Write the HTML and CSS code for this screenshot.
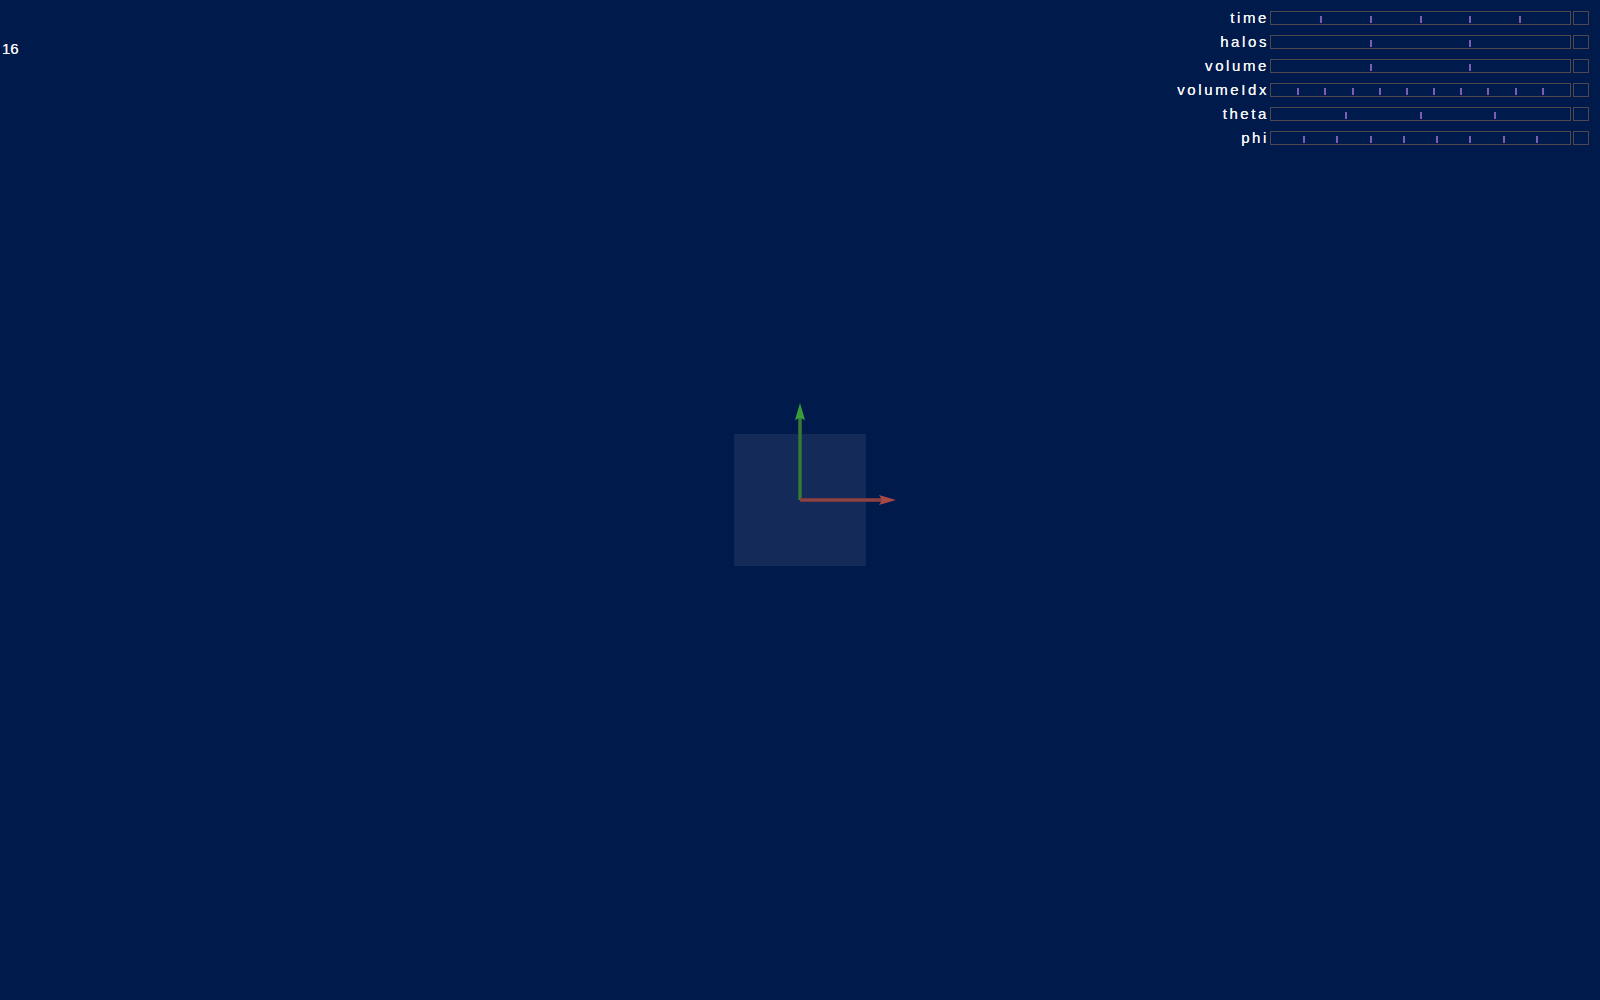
FILE: index.html
```html
<!DOCTYPE html>
<html>
<head>
    <title>Halo viewer</title>
    <link rel="stylesheet" href="styles.css">
</head>
<body>
    <div class="fps">16</div>

    <div class="scene">
        <div class="plane">
            <svg class="axes" width="132" height="132" viewBox="0 0 132 132">
                <!-- y axis -->
                <line x1="66" y1="66" x2="66" y2="-16" stroke="#2a6231" stroke-width="4"/>
                <line x1="66" y1="66" x2="66" y2="-16" stroke="#3c8441" stroke-width="1.5"/>
                <polygon points="66,-31 61,-14 66,-16 71,-14" fill="#3a9a3c"/>
                <!-- x axis -->
                <line x1="66" y1="66" x2="148" y2="66" stroke="#74383f" stroke-width="4"/>
                <line x1="66" y1="66" x2="148" y2="66" stroke="#944646" stroke-width="1.5"/>
                <polygon points="162,66 145,61 148,66 145,71" fill="#a84848"/>
            </svg>
        </div>
    </div>

    <div class="controls">
        <div class="row">
            <span class="label">time</span>
            <div class="track">
                <i class="tick" style="left: 16.67%"></i>
                <i class="tick" style="left: 33.33%"></i>
                <i class="tick" style="left: 50%"></i>
                <i class="tick" style="left: 66.67%"></i>
                <i class="tick" style="left: 83.33%"></i>
            </div>
            <div class="box"></div>
        </div>
        <div class="row">
            <span class="label">halos</span>
            <div class="track">
                <i class="tick" style="left: 33.33%"></i>
                <i class="tick" style="left: 66.67%"></i>
            </div>
            <div class="box"></div>
        </div>
        <div class="row">
            <span class="label">volume</span>
            <div class="track">
                <i class="tick" style="left: 33.33%"></i>
                <i class="tick" style="left: 66.67%"></i>
            </div>
            <div class="box"></div>
        </div>
        <div class="row">
            <span class="label">volumeIdx</span>
            <div class="track">
                <i class="tick" style="left: 9.09%"></i>
                <i class="tick" style="left: 18.18%"></i>
                <i class="tick" style="left: 27.27%"></i>
                <i class="tick" style="left: 36.36%"></i>
                <i class="tick" style="left: 45.45%"></i>
                <i class="tick" style="left: 54.55%"></i>
                <i class="tick" style="left: 63.64%"></i>
                <i class="tick" style="left: 72.73%"></i>
                <i class="tick" style="left: 81.82%"></i>
                <i class="tick" style="left: 90.91%"></i>
            </div>
            <div class="box"></div>
        </div>
        <div class="row">
            <span class="label">theta</span>
            <div class="track">
                <i class="tick" style="left: 25%"></i>
                <i class="tick" style="left: 50%"></i>
                <i class="tick" style="left: 75%"></i>
            </div>
            <div class="box"></div>
        </div>
        <div class="row">
            <span class="label">phi</span>
            <div class="track">
                <i class="tick" style="left: 11.11%"></i>
                <i class="tick" style="left: 22.22%"></i>
                <i class="tick" style="left: 33.33%"></i>
                <i class="tick" style="left: 44.44%"></i>
                <i class="tick" style="left: 55.56%"></i>
                <i class="tick" style="left: 66.67%"></i>
                <i class="tick" style="left: 77.78%"></i>
                <i class="tick" style="left: 88.89%"></i>
            </div>
            <div class="box"></div>
        </div>
    </div>
</body>
</html>
```

FILE: styles.css
```css
body {
    margin: 0;
    padding: 0;
    height: 100vh;
    overflow: hidden;
    background-color: #001a4b;
    font-family: "Liberation Sans", Arial, sans-serif;
    color: #f6f6f6;
}

.fps {
    position: absolute;
    top: 41px;
    left: 2px;
    font-size: 15px;
    line-height: 15px;
    text-shadow: 0 0 0.5px #fff;
}

.scene {
    height: 100vh;
    display: flex;
    align-items: center;
    justify-content: center;
}

.plane {
    position: relative;
    width: 132px;
    height: 132px;
    background-color: rgba(255, 255, 255, 0.08);
}

.axes {
    position: absolute;
    top: 0;
    left: 0;
    overflow: visible;
}

.controls {
    position: absolute;
    top: 11px;
    right: 11px;
    display: flex;
    flex-direction: column;
    gap: 10px;
}

.row {
    display: flex;
    align-items: center;
    justify-content: flex-end;
    height: 14px;
}

.label {
    font-size: 15px;
    line-height: 14px;
    letter-spacing: 2.6px;
    margin-right: 1px;
    text-shadow: 0 0 0.5px #fff;
}

.track {
    position: relative;
    box-sizing: border-box;
    width: 301px;
    height: 14px;
    border: 1px solid #4c4a4e;
}

.tick {
    position: absolute;
    top: 4px;
    width: 2px;
    height: 7px;
    margin-left: -1px;
    background-color: #7d5db2;
}

.box {
    box-sizing: border-box;
    width: 16px;
    height: 14px;
    margin-left: 2px;
    border: 1px solid #4c4a4e;
}
```
